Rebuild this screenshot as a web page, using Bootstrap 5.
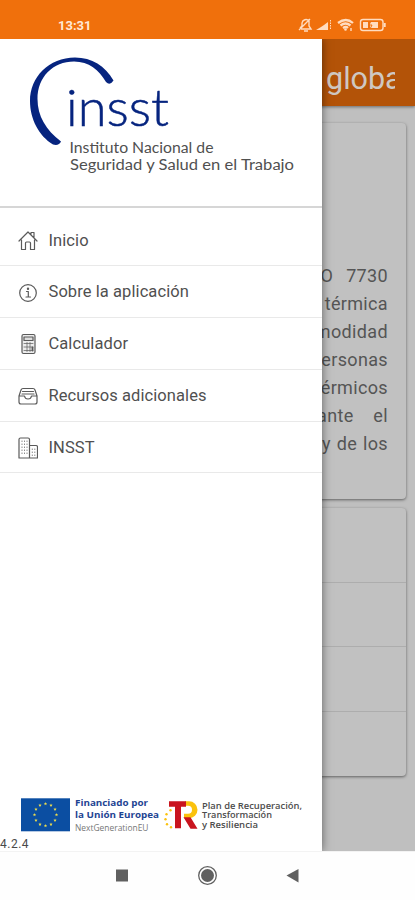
<!DOCTYPE html>
<html lang="es">
<head>
<meta charset="utf-8">
<meta name="viewport" content="width=device-width, initial-scale=1">
<title>INSST</title>
<link href="https://cdn.jsdelivr.net/npm/bootstrap@5.3.0/dist/css/bootstrap.min.css" rel="stylesheet">
<style>
body{font-family:Roboto,"Liberation Sans",sans-serif;color:#4a4a4a}
.phone{width:415px;height:900px}
.status{height:38.500px;background:#f0700c;padding:12px 28px 0 58px}
.clock{font-size:13px;line-height:28px;font-weight:700;color:#ffe9d6}
.stage{height:812.500px;background:#bfbfbf}
.topbar{height:67.500px;background:#b35308;padding:0 20px 0 326px;box-shadow:0 1px 3px rgba(0,0,0,.45)}
.topbar h1{font-size:30.500px;line-height:79px;font-weight:400;color:#cfc8c2}
.panel{margin:0 9px 0 10px;background:#c1c1c1;border-radius:4px;box-shadow:0 1px 3px rgba(0,0,0,.5)}
.intro{margin-top:17px;height:376px;padding:139px 18px 0 0;font-size:18px;line-height:28px;letter-spacing:.35px;color:#555}
.wide{word-spacing:8px}.wider{word-spacing:15px}.tight{word-spacing:1px}
.rows{margin-top:9px;height:268px}
.rows div{border-bottom:1px solid #adadad}
.r1{height:75px}.r2{height:64px}.r3{height:65px}
.drawer{width:322px;box-shadow:0 0 9px rgba(0,0,0,.5)}
.brand{height:169px;border-bottom:2px solid #d6d6d6}
.menu{padding-top:7px}
.item{height:51.8px;border-bottom:1.5px solid #e9e9e9;padding:2px 0 0 18px;gap:10.500px;font-size:16.500px;letter-spacing:.08px;color:#505050}
.item svg{width:20px;height:22px;fill:none;stroke:#5a5a5a;stroke-width:1.2;stroke-linejoin:round;stroke-linecap:round}
.version{font-size:12px;line-height:14px;letter-spacing:.5px}
.keys{height:49px;background:#fefefe;border-top:1px solid #f3f3f3}
</style>
<script src="https://cdn.jsdelivr.net/npm/bootstrap@5.3.0/dist/js/bootstrap.bundle.min.js"></script>
</head>
<body class="m-0">
<div class="phone d-flex flex-column overflow-hidden">
  <header class="status d-flex justify-content-between align-items-start">
    <span class="clock">13:31</span>
    <svg width="91" height="26" viewBox="0 0 91 26" fill="none" stroke="#ffdcc0" stroke-width="1.4">
      <path d="M4 16l2-2V11a4 4 0 0 1 7-2v5l2 3H5M8 19h4M3 18L14 7"/>
      <path d="M20 18l5-3v3zM25 15l3-2v5h-3zM28 13l4-3v8h-4z" fill="#ffdcc0" stroke="none"/><path d="M34.500 8v10" stroke-width="1" stroke-dasharray="1.500 1"/>
      <path d="M42 11q8-6 15 0M44.500 13.500q5-4 10 0M47 16q3-2 5 0" stroke-width="2.300"/><circle cx="49.500" cy="17.500" r="1.300" fill="#ffdcc0" stroke="none"/><path d="M55 16v3"/>
      <rect x="64.500" y="7.500" width="22.500" height="11" rx="2.500"/><path d="M88.700 11v4" stroke-width="2"/><path d="M67 10h5v6h-5zM74 10h8v6h-8z" fill="#ffdcc0" stroke="none"/><path d="M75 9l-2 4h3l-2 4" stroke="#f0700c" stroke-width="1"/>
    </svg>
  </header>

  <main class="stage position-relative overflow-hidden">
    <div class="topbar"><h1 class="m-0 overflow-hidden text-nowrap">global</h1></div>
    <section class="panel intro text-end">
      <div class="wide">ISO 7730</div>
      <div>térmica</div>
      <div>comodidad</div>
      <div>personas</div>
      <div>térmicos</div>
      <div class="wider">mediante el</div>
      <div class="tight">y de los</div>
    </section>
    <section class="panel rows"><div class="r1"></div><div class="r2"></div><div class="r3"></div></section>

    <aside class="drawer position-absolute top-0 start-0 h-100 bg-white d-flex flex-column">
      <div class="brand">
        <svg width="322" height="166" viewBox="0 38 322 166">
          <path fill="#06247f" d="M113.500 79.500C105 65 92 56.500 75 56.500C49 56.500 30 76 30 100C30 118 39 135 53 143.500Q59 145 61 140.500C46 129 37.500 115 37.500 98C37.500 76 53 60.500 74 60.500C89 60.500 99 69 106 81Q110 85 113.500 79.500Z"/>
          <text x="66" y="124.500" font-family="Lato" font-size="51" fill="#06247f" font-weight="300" stroke="#06247f" stroke-width=".5" textLength="103" lengthAdjust="spacingAndGlyphs">insst</text>
          <g font-family="Lato" font-size="14.500" fill="#505050">
            <text x="69.500" y="152" textLength="144" lengthAdjust="spacingAndGlyphs">Instituto Nacional de</text>
            <text x="70" y="169" textLength="224" lengthAdjust="spacingAndGlyphs">Seguridad y Salud en el Trabajo</text>
          </g>
        </svg>
      </div>
      <nav class="menu d-flex flex-column">
        <div class="item d-flex align-items-center"><svg viewBox="0 0 20 22"><path d="M1 11L10 2l9 9M13 4V2.500h3V8M3.500 10v9.500h4V13q0-1 1-1h3q1 0 1 1v6.500h4V10"/></svg>Inicio</div>
        <div class="item d-flex align-items-center"><svg viewBox="0 0 20 22"><circle cx="10" cy="11" r="8.300"/><path d="M8.500 9.500H10.300V15M8 15h4.500"/><circle cx="10" cy="6.800" r=".6" fill="#505050"/></svg>Sobre la aplicación</div>
        <div class="item d-flex align-items-center"><svg viewBox="0 0 20 22"><rect x="4" y="1.500" width="13" height="19" rx="1.500" fill="#ececec"/><rect x="6" y="4" width="9" height="3.500" fill="#ddd"/><path d="M6 10.500h9M6 14h9M6 17.500h9M9 9.500v9M12 9.500v9" stroke-width=".7"/><path d="M14.500 14.500v3" stroke-width="1.800"/></svg>Calculador</div>
        <div class="item d-flex align-items-center"><svg viewBox="0 0 20 22"><path d="M1 11L3 5q.5-1.500 2-1.500h10q1.500 0 2 1.500l2 6v6q0 2-2 2H3q-2 0-2-2zM1 11h5.500q.5 3 3.500 3t3.500-3H19M4.500 6.500h11M4 9h12"/></svg>Recursos adicionales</div>
        <div class="item d-flex align-items-center"><svg viewBox="0 0 20 22"><path d="M1 21V2.500Q1 1 2.500 1H10q1.500 0 1.500 1.500V21zM11.500 8.500H18q1.500 0 1.500 1.500v11h-8"/><path d="M4 4v14M6.500 4v14M9 4v14M14.300 12v7M16.800 12v7" stroke-width=".8" stroke-dasharray=".5 2.500"/></svg>INSST</div>
      </nav>
      <footer class="mt-auto d-flex flex-column">
        <svg class="d-block" width="322" height="40" viewBox="0 796.700 322 40">
          <rect x="21" y="798" width="49" height="33" fill="#0b4ea2"/>
          <g id="stars" fill="#f4e04a"></g>
          <g font-family="Open Sans">
            <g fill="#1f4593" font-weight="700" font-size="9.300"><text x="75" y="805.500" textLength="73" lengthAdjust="spacingAndGlyphs">Financiado por</text><text x="75" y="818" textLength="84" lengthAdjust="spacingAndGlyphs">la Unión Europea</text></g>
            <text x="75" y="831" font-size="8.300" fill="#777" textLength="73.500" lengthAdjust="spacingAndGlyphs">NextGenerationEU</text>
            <g fill="#4c4c4c" font-weight="600" font-size="8"><text x="202" y="808.500" textLength="100" lengthAdjust="spacingAndGlyphs">Plan de Recuperación,</text><text x="202" y="818" textLength="70" lengthAdjust="spacingAndGlyphs">Transformación</text><text x="202" y="827.500" textLength="56" lengthAdjust="spacingAndGlyphs">y Resiliencia</text></g>
          </g>
          <path d="M185 801h4a8.500 8.500 0 0 1 0 17H184v-4.500h4a4 4 0 0 0 0-8h-3z" fill="#fbc20d"/>
          <path d="M169 801h17v5.500h-5V828h-6V806.500H169zM183.500 817h7l7 11.500h-7z" fill="#c9141e"/>
          <g fill="#fbc20d"><circle cx="170.500" cy="810" r="1.200"/><circle cx="166.500" cy="814" r="1.200"/><circle cx="165.500" cy="819" r="1.200"/><circle cx="167" cy="824" r="1.200"/><circle cx="171" cy="827" r="1.200"/></g>
        </svg>
        <span class="version">4.2.4</span>
      </footer>
    </aside>
  </main>

  <footer class="keys">
    <svg class="d-block" width="415" height="48" viewBox="0 852 415 48" fill="#606060">
      <rect x="116" y="869.500" width="12" height="12"/>
      <circle cx="207.500" cy="875.500" r="6.500"/><circle cx="207.500" cy="875.500" r="8.800" fill="none" stroke="#606060" stroke-width="1.300"/>
      <path d="M286.500 875.500L298.500 869v13.500z"/>
    </svg>
  </footer>
</div>
<script>
// Ring of twelve five-pointed stars on the flag
const ns='http://www.w3.org/2000/svg',ring=document.getElementById('stars');
for(let i=0;i<12;i++){
  const cx=45.5+11*Math.sin(i*Math.PI/6),cy=814.5-11*Math.cos(i*Math.PI/6),pts=[];
  for(let k=0;k<10;k++){const r=k%2?.8:1.8;pts.push((cx+r*Math.sin(k*Math.PI/5)).toFixed(2)+','+(cy-r*Math.cos(k*Math.PI/5)).toFixed(2));}
  const p=document.createElementNS(ns,'polygon');p.setAttribute('points',pts.join(' '));ring.appendChild(p);
}
</script>
</body>
</html>
